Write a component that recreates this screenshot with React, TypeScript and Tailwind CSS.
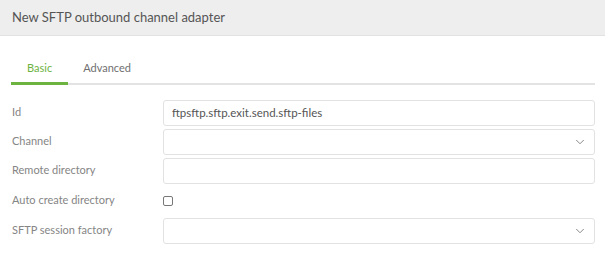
import { ChevronDown } from 'lucide-react'

const font = { fontFamily: '"Lato", "Noto Sans", sans-serif' }

function TextField({ value }: { value?: string }) {
  return (
    <div className="flex h-[26px] flex-1 items-center rounded-[3px] border border-[#e2e2e2] bg-white px-[8px] text-[11.5px] text-[#555]">
      {value}
    </div>
  )
}

function SelectField() {
  return (
    <div className="flex h-[26px] flex-1 items-center justify-end rounded-[3px] border border-[#e2e2e2] bg-white pr-[7px]">
      <ChevronDown className="h-[14px] w-[14px] text-[#777]" strokeWidth={1.5} />
    </div>
  )
}

function Row({ label, children }: { label: string; children: React.ReactNode }) {
  return (
    <div className="flex items-center">
      <div className="w-[151px] text-[11px] text-[#858585]">{label}</div>
      {children}
    </div>
  )
}

export default function App() {
  return (
    <div className="h-[254px] w-[605px] bg-white" style={font}>
      {/* Header */}
      <div className="flex h-[36px] items-center border-b border-[#e2e2e2] bg-[#eeeeee] px-[12px] text-[13px] text-[#555]">
        New SFTP outbound channel adapter
      </div>

      <div className="pl-[11px] pr-[10px]">
        {/* Tabs */}
        <div className="mt-[24px] flex border-b-2 border-[#e3e3e3]">
          <div className="-mb-[2px] border-b-[3px] border-[#6db33f] px-[16px] pb-[5px] text-[11px] text-[#6db33f]">
            Basic
          </div>
          <div className="pl-[15px] pb-[5px] text-[11px] text-[#707070]">Advanced</div>
        </div>

        {/* Form */}
        <div className="mt-[15px] flex flex-col gap-[3px] pl-[1px]">
          <Row label="Id">
            <TextField value="ftpsftp.sftp.exit.send.sftp-files" />
          </Row>
          <Row label="Channel">
            <SelectField />
          </Row>
          <Row label="Remote directory">
            <TextField />
          </Row>
          <Row label="Auto create directory">
            <div className="flex h-[28px] items-center">
              <div className="h-[10px] w-[10px] rounded-[2px] border border-[#777]" />
            </div>
          </Row>
          <Row label="SFTP session factory">
            <SelectField />
          </Row>
        </div>
      </div>
    </div>
  )
}
